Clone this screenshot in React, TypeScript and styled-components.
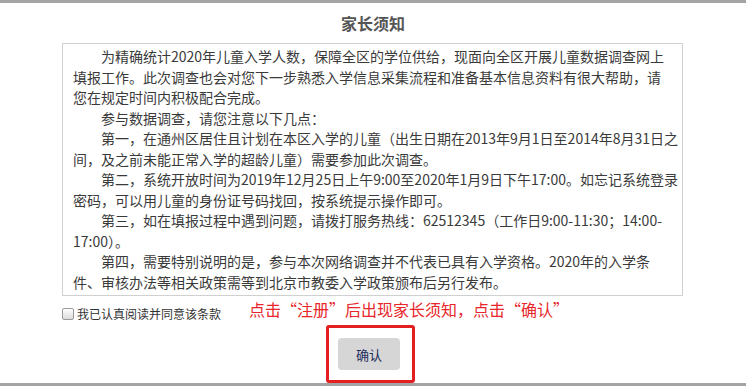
import React, { useState } from 'react';
import styled, { createGlobalStyle } from 'styled-components';

const GlobalStyle = createGlobalStyle`
  html, body {
    margin: 0;
    padding: 0;
    background: #ffffff;
  }
  body {
    font-family: "Noto Sans CJK SC", "Liberation Sans", sans-serif;
  }
`;

const Page = styled.div`
  width: 746px;
  height: 386px;
  box-sizing: border-box;
  display: flex;
  flex-direction: column;
  border-top: 3px solid #a3a3a3;
  border-bottom: 3px solid #a3a3a3;
  overflow: hidden;
`;

const Title = styled.h2`
  margin: 0;
  height: 40px;
  display: flex;
  align-items: center;
  justify-content: center;
  font-size: 16px;
  font-weight: bold;
  color: #555555;
`;

const NoticeBox = styled.div`
  margin: 0 63px 0 62px;
  height: 253px;
  box-sizing: border-box;
  border: 1px solid #d0d0d0;
  padding: 2px 4px 0 10px;
  overflow: hidden;
  font-size: 14px;
  line-height: 20.5px;
  color: #3a3a3a;
`;

const Para = styled.p`
  margin: 0;
  text-indent: 2em;
  white-space: nowrap;
`;

const AgreeRow = styled.div`
  height: 29px;
  display: flex;
  align-items: flex-start;
  padding-left: 62px;
`;

const AgreeLabel = styled.label`
  display: flex;
  align-items: center;
  gap: 3px;
  margin-top: 9px;
  font-size: 12px;
  line-height: 18px;
  color: #333333;
  cursor: pointer;
`;

const Check = styled.input`
  appearance: none;
  width: 12px;
  height: 12px;
  margin: 0;
  border: 1px solid #9a9a9a;
  border-radius: 2px;
  background: linear-gradient(#ffffff, #dcdcdc);
  &:checked {
    background: #5b8dd6;
    border-color: #3d6fb8;
  }
`;

const Hint = styled.span`
  margin: 3px 0 0 28px;
  font-size: 16px;
  line-height: 20px;
  color: #e8262a;
`;

const ButtonRow = styled.div`
  flex: 1;
  display: flex;
  justify-content: center;
  padding-right: 5px;
`;

const Highlight = styled.div`
  box-sizing: border-box;
  height: 58px;
  border: 3px solid #e3201f;
  border-radius: 3px;
  padding: 10px 12px 10px 9px;
`;

const ConfirmButton = styled.button`
  width: 62px;
  height: 32px;
  border: none;
  border-radius: 4px;
  background: #d6d6d6;
  color: #1f2d5c;
  font-family: inherit;
  font-size: 13px;
  cursor: pointer;
`;

const App = () => {
  const [agreed, setAgreed] = useState(false);

  return (
    <>
      <GlobalStyle />
      <Page>
        <Title>家长须知</Title>
        <NoticeBox>
          <Para>
            为精确统计2020年儿童入学人数，保障全区的学位供给，现面向全区开展儿童数据调查网上
            <br />
            填报工作。此次调查也会对您下一步熟悉入学信息采集流程和准备基本信息资料有很大帮助，请
            <br />
            您在规定时间内积极配合完成。
          </Para>
          <Para>参与数据调查，请您注意以下几点：</Para>
          <Para>
            第一，在通州区居住且计划在本区入学的儿童（出生日期在2013年9月1日至2014年8月31日之
            <br />
            间，及之前未能正常入学的超龄儿童）需要参加此次调查。
          </Para>
          <Para>
            第二，系统开放时间为2019年12月25日上午9:00至2020年1月9日下午17:00。如忘记系统登录
            <br />
            密码，可以用儿童的身份证号码找回，按系统提示操作即可。
          </Para>
          <Para>
            第三，如在填报过程中遇到问题，请拨打服务热线：62512345（工作日9:00-11:30；14:00-
            <br />
            17:00）。
          </Para>
          <Para>
            第四，需要特别说明的是，参与本次网络调查并不代表已具有入学资格。2020年的入学条
            <br />
            件、审核办法等相关政策需等到北京市教委入学政策颁布后另行发布。
          </Para>
        </NoticeBox>
        <AgreeRow>
          <AgreeLabel>
            <Check
              type="checkbox"
              checked={agreed}
              onChange={(e) => setAgreed(e.target.checked)}
            />
            我已认真阅读并同意该条款
          </AgreeLabel>
          <Hint>点击“注册”后出现家长须知，点击“确认”</Hint>
        </AgreeRow>
        <ButtonRow>
          <Highlight>
            <ConfirmButton>确认</ConfirmButton>
          </Highlight>
        </ButtonRow>
      </Page>
    </>
  );
};

export default App;
